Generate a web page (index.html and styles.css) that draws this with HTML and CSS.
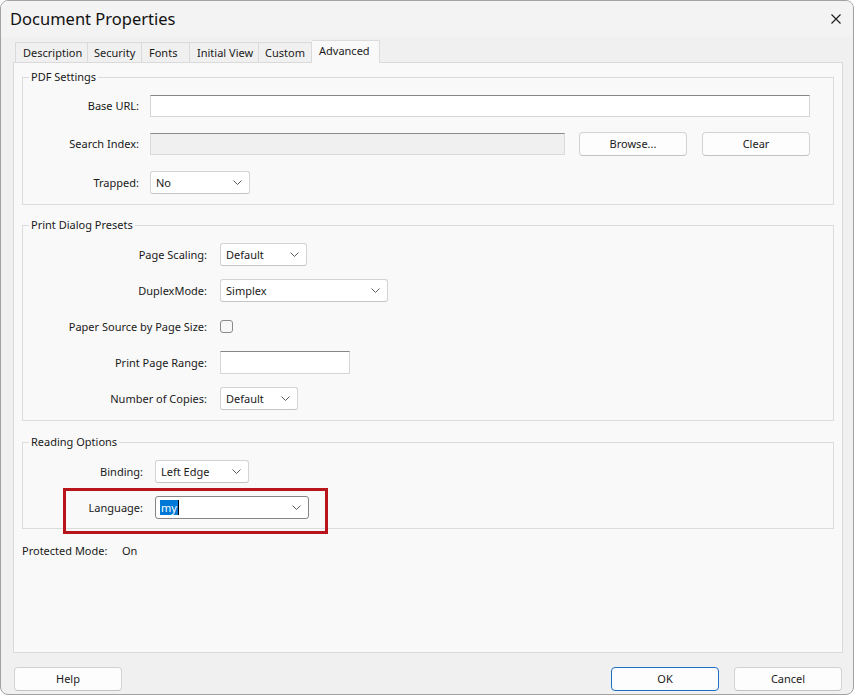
FILE: index.html
```html
<!DOCTYPE html>
<html>
<head>
<meta charset="utf-8">
<title>Document Properties</title>
<link rel="stylesheet" href="styles.css">
</head>
<body>
<div class="window">
  <div class="titlebar">
    <span class="title">Document Properties</span>
    <svg class="close" width="10" height="10" viewBox="0 0 10 10"><path d="M0.5 0.5 L9.5 9.5 M9.5 0.5 L0.5 9.5" stroke="#1a1a1a" stroke-width="1.1" fill="none"/></svg>
  </div>
  <div class="tabs">
    <div class="tab t-desc">Description</div>
    <div class="tab t-sec">Security</div>
    <div class="tab t-fonts">Fonts</div>
    <div class="tab t-init">Initial View</div>
    <div class="tab t-custom">Custom</div>
    <div class="tab t-adv active">Advanced</div>
  </div>
  <div class="panel">
    <fieldset class="group g-pdf">
      <legend>PDF Settings</legend>
      <div class="form f-pdf">
        <span class="label">Base URL:</span>
        <div class="input w-base"></div>
        <span class="label">Search Index:</span>
        <div class="search-row">
          <div class="input disabled w-search"></div>
          <button class="btn">Browse...</button>
          <button class="btn clear">Clear</button>
        </div>
        <span class="label">Trapped:</span>
        <div class="select w-trapped"><span>No</span><svg class="chev" width="9" height="5" viewBox="0 0 9 5"><path d="M0.5 0.5 L4.5 4.5 L8.5 0.5" stroke="#5a5a5a" fill="none"/></svg></div>
      </div>
    </fieldset>

    <fieldset class="group g-print">
      <legend>Print Dialog Presets</legend>
      <div class="form f-print">
        <span class="label">Page Scaling:</span>
        <div class="select w-scaling"><span>Default</span><svg class="chev" width="9" height="5" viewBox="0 0 9 5"><path d="M0.5 0.5 L4.5 4.5 L8.5 0.5" stroke="#5a5a5a" fill="none"/></svg></div>
        <span class="label">DuplexMode:</span>
        <div class="select w-duplex"><span>Simplex</span><svg class="chev" width="9" height="5" viewBox="0 0 9 5"><path d="M0.5 0.5 L4.5 4.5 L8.5 0.5" stroke="#5a5a5a" fill="none"/></svg></div>
        <span class="label">Paper Source by Page Size:</span>
        <div class="check-cell"><div class="checkbox"></div></div>
        <span class="label">Print Page Range:</span>
        <div class="input w-range"></div>
        <span class="label">Number of Copies:</span>
        <div class="select w-copies"><span>Default</span><svg class="chev" width="9" height="5" viewBox="0 0 9 5"><path d="M0.5 0.5 L4.5 4.5 L8.5 0.5" stroke="#5a5a5a" fill="none"/></svg></div>
      </div>
    </fieldset>

    <fieldset class="group g-read">
      <legend>Reading Options</legend>
      <div class="form f-read">
        <span class="label">Binding:</span>
        <div class="select w-binding"><span>Left Edge</span><svg class="chev" width="9" height="5" viewBox="0 0 9 5"><path d="M0.5 0.5 L4.5 4.5 L8.5 0.5" stroke="#5a5a5a" fill="none"/></svg></div>
        <span class="label lang-label">Language:</span>
        <div class="select focused w-lang"><span class="sel">my</span><span class="caret"></span><svg class="chev" width="9" height="5" viewBox="0 0 9 5"><path d="M0.5 0.5 L4.5 4.5 L8.5 0.5" stroke="#5a5a5a" fill="none"/></svg></div>
      </div>
      <div class="highlight"></div>
    </fieldset>

    <div class="protected"><span class="pm-label">Protected Mode:</span><span>On</span></div>
  </div>
  <div class="footer">
    <button class="btn">Help</button>
    <div class="footer-right">
      <button class="btn primary">OK</button>
      <button class="btn">Cancel</button>
    </div>
  </div>
</div>
</body>
</html>
```

FILE: styles.css
```css
* { box-sizing: border-box; }
html, body { margin: 0; padding: 0; }
body {
  background: #ffffff;
  font-family: "Noto Sans", "Open Sans", sans-serif;
  font-size: 11px;
  color: #1a1a1a;
  width: 856px;
  height: 698px;
  overflow: hidden;
}
.window {
  width: 854px;
  height: 695px;
  border: 1px solid #a2a2a2;
  border-radius: 8px;
  background: #f0f0f0;
  display: flex;
  flex-direction: column;
  overflow: hidden;
}
.titlebar {
  height: 36px;
  flex: none;
  background: #f3f3f3;
  display: flex;
  align-items: center;
  justify-content: space-between;
  padding: 0 12px 0 9px;
}
.title {
  font-size: 16.5px;
  color: #111;
  line-height: 20px;
}
.close { display: block; margin-top: 0; }

.tabs {
  flex: none;
  display: flex;
  align-items: flex-end;
  padding: 3px 0 0 14px;
  margin-bottom: -1px;
}
.tab {
  height: 20px;
  margin-bottom: 1px;
  padding-left: 7px;
  line-height: 19px;
  background: #f0f0f0;
  border: 1px solid #dadada;
  border-bottom: none;
  border-left: none;
  white-space: nowrap;
}
.tab.t-desc { width: 73px; border-left: 1px solid #dadada; }
.tab.t-sec { width: 54px; padding-left: 6px; }
.tab.t-fonts { width: 48px; }
.tab.t-init { width: 69px; }
.tab.t-custom { width: 53px; padding-left: 6px; }
.tab.active {
  width: 68px;
  height: 23px;
  margin-bottom: 0;
  line-height: 20px;
  background: #f9f9f9;
  border: 1px solid #dcdcdc;
  border-bottom: none;
  border-left: none;
  position: relative;
  z-index: 1;
}

.panel {
  flex: 1;
  margin: 0 10px 0 12px;
  border: 1px solid #dadada;
  background: #f9f9f9;
  padding: 6px 8px 0 8px;
  display: flex;
  flex-direction: column;
}

.group {
  margin: 0;
  border: 1px solid #dcdcdc;
  padding: 10px 0 10px 0;
  min-width: 0;
  position: relative;
}
.group legend {
  margin-left: 6px;
  padding: 0 2px;
  font-size: 11px;
  line-height: 16px;
}
.g-print { margin-top: 12px; }
.g-read { margin-top: 13px; padding-bottom: 9px; }

.form {
  display: grid;
  align-items: center;
  justify-items: start;
}
.f-pdf { grid-template-columns: 116px auto; column-gap: 11px; row-gap: 15px; }
.f-print { grid-template-columns: 184px auto; column-gap: 13px; row-gap: 13px; }
.f-read { grid-template-columns: 120px auto; column-gap: 12px; row-gap: 13px; }
.label { justify-self: end; white-space: nowrap; line-height: 16px; }

.input {
  height: 22px;
  background: #ffffff;
  border: 1px solid #d6d6d6;
  border-top-color: #868686;
}
.input.disabled { background: #f0f0f0; border-color: #dadada; border-top-color: #8a8a8a; }
.w-base { width: 660px; }
.w-search { width: 415px; }
.w-range { width: 130px; height: 23px; }

.search-row {
  display: flex;
  align-items: center;
}
.search-row .btn { margin-left: 14px; }
.search-row .btn.clear { margin-left: 15px; }

.btn {
  width: 108px;
  height: 24px;
  font-family: inherit;
  font-size: 11px;
  color: #1a1a1a;
  background: #fdfdfd;
  border: 1px solid #d2d2d2;
  border-bottom-color: #c2c2c2;
  border-radius: 4px;
  padding: 0;
  line-height: 20px;
}
.btn.primary { border: 1px solid #1f6fbf; }

.select {
  height: 23px;
  background: #ffffff;
  border: 1px solid #d3d3d3;
  border-bottom-color: #c4c4c4;
  border-radius: 3px;
  display: flex;
  align-items: center;
  padding: 0 7px 0 5px;
  line-height: 16px;
}
.select .chev { margin-left: auto; display: block; flex: none; }
.w-trapped { width: 100px; }
.w-scaling { width: 87px; }
.w-duplex { width: 168px; }
.w-copies { width: 78px; }
.w-binding { width: 94px; }
.w-lang { width: 154px; }
.select.focused { border: 1px solid #858585; padding-left: 4px; }
.sel { background: #0078d7; color: #ffffff; padding: 0 1px; line-height: 15px; }
.caret { width: 1px; height: 15px; background: #000; }

.check-cell { height: 23px; display: flex; align-items: center; }
.checkbox {
  width: 13px;
  height: 13px;
  border: 1px solid #8a8a8a;
  border-radius: 3px;
  background: #f7f7f7;
}

.highlight {
  position: absolute;
  left: 40px;
  top: 38px;
  width: 265px;
  height: 46px;
  border: 3px solid #b8141c;
  pointer-events: none;
}

.protected {
  margin-top: 14px;
  display: flex;
  line-height: 16px;
}
.pm-label { width: 100px; }

.footer {
  flex: none;
  height: 41px;
  padding: 14px 11px 0 13px;
  display: flex;
  justify-content: space-between;
  align-items: flex-start;
}
.footer-right { display: flex; gap: 15px; }
```
